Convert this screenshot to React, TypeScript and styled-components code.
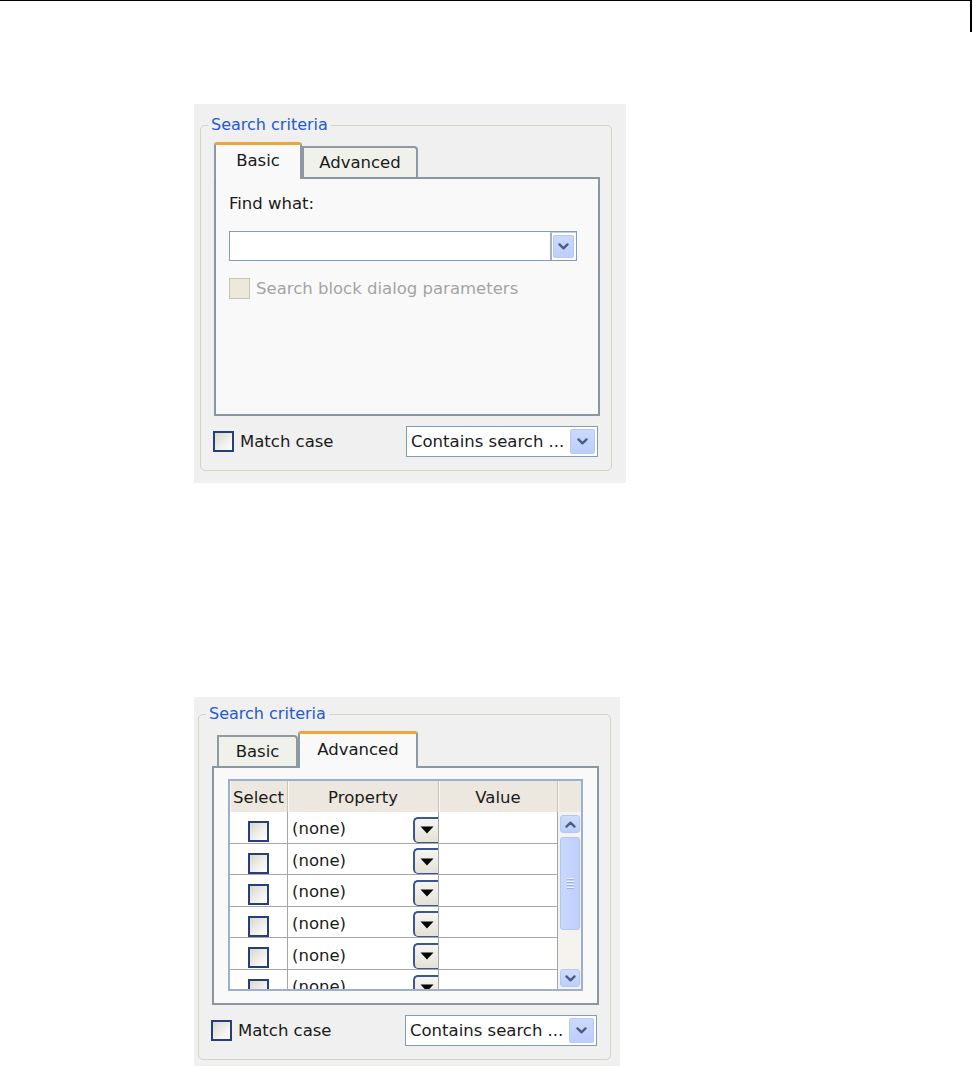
import React from "react";
import styled, { createGlobalStyle } from "styled-components";

const GlobalStyle = createGlobalStyle`
  html, body { margin: 0; padding: 0; background: #ffffff; }
  body { font-family: "DejaVu Sans", "Liberation Sans", sans-serif; color: #1a1a1a; }
  *, *::before, *::after { box-sizing: border-box; }
`;

const Page = styled.main`
  width: 973px;
  height: 1067px;
  overflow: hidden;
  display: flex;
  flex-direction: column;
`;

const RunningHead = styled.header`
  flex: none;
  width: 972px;
  height: 32px;
  border-top: 1px solid #000;
  border-right: 2px solid #000;
`;

const Panel = styled.section<{ $w: number; $mt: number; $pt: number; $pb: number; $pl: number }>`
  flex: none;
  margin: ${(p) => p.$mt}px 0 0 194px;
  width: ${(p) => p.$w}px;
  padding: ${(p) => p.$pt}px 0 ${(p) => p.$pb}px ${(p) => p.$pl}px;
  background: #f0f0f0;
`;

const Group = styled.fieldset<{ $w: number }>`
  width: ${(p) => p.$w}px;
  margin: 0;
  padding: 7px 11px 13px 13px;
  border: 1px solid #d3d3c3;
  border-radius: 5px;
  min-inline-size: 0;
`;

const Legend = styled.legend`
  margin-left: -6px;
  padding: 0 3px;
  font-size: 16px;
  line-height: 20px;
  color: #2458d8;
`;

const Stack = styled.div`
  display: flex;
  flex-direction: column;
`;

const TabStrip = styled.div`
  display: flex;
  align-items: flex-end;
  height: 35px;
`;

const Tab = styled.div<{ $active: boolean; $w: number; $ml: number }>`
  position: relative;
  z-index: ${(p) => (p.$active ? 2 : 1)};
  width: ${(p) => p.$w}px;
  margin-left: ${(p) => p.$ml}px;
  height: ${(p) => (p.$active ? 37 : 31)}px;
  margin-bottom: ${(p) => (p.$active ? -2 : 0)}px;
  padding-bottom: ${(p) => (p.$active ? 3 : 0)}px;
  border: 2px solid #8d9aa1;
  border-bottom: none;
  border-top: ${(p) => (p.$active ? "3px solid #f2a537" : "2px solid #8d9aa1")};
  border-radius: ${(p) => (p.$active ? "3px 3px 0 0" : "0 4px 0 0")};
  background: ${(p) => (p.$active ? "#f9f9f9" : "#f1f1ec")};
  display: flex;
  align-items: center;
  justify-content: center;
  font-size: 16.5px;
  line-height: 20px;
  color: #1a1a1a;
`;

const TabBody = styled.div`
  height: 239px;
  border: 2px solid #8a979d;
  background: #f9f9f9;
`;

const BasicBody = styled.div`
  display: flex;
  flex-direction: column;
  align-items: flex-start;
  padding: 15px 0 0 13px;
`;

const FieldLabel = styled.div`
  font-size: 16.5px;
  line-height: 20px;
  color: #1a1a1a;
`;

const Select = styled.div<{ $w: number; $h: number; $mt?: number }>`
  display: flex;
  align-items: stretch;
  width: ${(p) => p.$w}px;
  height: ${(p) => p.$h}px;
  margin-top: ${(p) => p.$mt ?? 0}px;
  border: 1px solid #7f9db9;
  background: #ffffff;
`;

const SelectText = styled.span`
  flex: 1;
  display: flex;
  align-items: center;
  padding-left: 4px;
  font-size: 16.5px;
  line-height: 20px;
  white-space: nowrap;
  overflow: hidden;
  color: #1a1a1a;
`;

const ComboFrame = styled.span`
  flex: none;
  display: flex;
  padding: 2px 2px 2px 1px;
  border-left: 2px solid #a7b0bb;
  border-top: 1px solid #c9ced5;
`;

const ArrowButton = styled.span<{ $w: number }>`
  flex: none;
  width: ${(p) => p.$w}px;
  display: flex;
  align-items: center;
  justify-content: center;
  border: 1px solid #b7c9f4;
  border-radius: 2px;
  background: linear-gradient(#cbd9fd, #bccefb);
`;

const PlainArrow = styled(ArrowButton)`
  margin: 2px 2px 2px 0;
`;

const OptionRow = styled.label<{ $mt?: number }>`
  display: flex;
  align-items: center;
  gap: 6px;
  margin-top: ${(p) => p.$mt ?? 0}px;
`;

const CheckBox = styled.span<{ $disabled?: boolean }>`
  flex: none;
  width: 21px;
  height: 21px;
  border: ${(p) => (p.$disabled ? "1.5px solid #c9c5b5" : "2px solid #263f7b")};
  background: ${(p) =>
    p.$disabled ? "#ece9dc" : "linear-gradient(135deg, #d8d8d0 0%, #efefea 55%, #ffffff 100%)"};
`;

const OptionText = styled.span<{ $disabled?: boolean }>`
  font-size: 16.5px;
  line-height: 20px;
  color: ${(p) => (p.$disabled ? "#a4a4a4" : "#1a1a1a")};
`;

const Footer = styled.div`
  display: flex;
  align-items: center;
  justify-content: space-between;
  height: 31px;
  margin: 10px 2px 0 -1px;
`;

/* ---------- table ---------- */

const Table = styled.div`
  margin: 11px 0 0 14px;
  width: 355px;
  height: 212px;
  border: 2px solid #9bb0cd;
  background: #ffffff;
  display: flex;
  flex-direction: column;
  overflow: hidden;
`;

const HeaderRow = styled.div`
  flex: none;
  display: flex;
  height: 31px;
  background: #ece8df;
`;

const HeadCell = styled.div<{ $w: number; $last?: boolean }>`
  flex: none;
  width: ${(p) => p.$w}px;
  display: flex;
  align-items: center;
  justify-content: center;
  padding-top: 3px;
  font-size: 16.5px;
  line-height: 20px;
  color: #1a1a1a;
  border-right: ${(p) => (p.$last ? "none" : "1px solid #c8c3b6")};
  box-shadow: inset 1px 0 0 #fbfaf7;
`;

const BodyArea = styled.div`
  flex: 1;
  display: flex;
  min-height: 0;
`;

const Rows = styled.div`
  width: 328px;
  flex: none;
  overflow: hidden;
`;

const Row = styled.div`
  display: flex;
  height: 31.6px;
  border-bottom: 1px solid #a6a6a6;
`;

const SelectCell = styled.div`
  flex: none;
  width: 58px;
  display: flex;
  justify-content: center;
  align-items: flex-start;
  padding-top: 9px;
  border-right: 1px solid #a6a6a6;
`;

const PropertyCell = styled.div`
  flex: none;
  width: 151px;
  display: flex;
  justify-content: space-between;
  align-items: flex-end;
  border-right: 1px solid #a6a6a6;
`;

const CellText = styled.span`
  align-self: center;
  padding: 4px 0 0 4px;
  font-size: 16.5px;
  line-height: 20px;
  color: #1a1a1a;
`;

const DropButton = styled.span`
  flex: none;
  width: 25px;
  height: 26px;
  display: flex;
  align-items: center;
  justify-content: center;
  border: 2px solid #3b5792;
  border-right: none;
  border-bottom-width: 1px;
  border-radius: 5px 0 0 5px;
  background: linear-gradient(#f6f5f1, #e4e1d6);
`;

const ValueCell = styled.div`
  flex: none;
  width: 119px;
  border-right: 1px solid #a6a6a6;
`;

const ScrollBar = styled.div`
  flex: none;
  width: 23px;
  display: flex;
  flex-direction: column;
  padding: 3px 1px 2px 2px;
  background: #f4f3ee;
`;

const ScrollButton = styled.span<{ $end?: boolean }>`
  flex: none;
  height: 18px;
  margin-top: ${(p) => (p.$end ? "auto" : "0")};
  display: flex;
  align-items: center;
  justify-content: center;
  border: 1px solid #b5c8f3;
  border-radius: 3px;
  background: linear-gradient(#d0dcfd, #bccefb);
`;

const Thumb = styled.span`
  flex: none;
  height: 93px;
  margin-top: 4px;
  display: flex;
  align-items: center;
  justify-content: center;
  border: 1px solid #b3c6f2;
  border-radius: 3px;
  background: linear-gradient(90deg, #c9d8fd, #bdcffb);
`;

const Grip = styled.span`
  width: 7px;
  height: 11px;
  background: repeating-linear-gradient(to bottom, #eef3ff 0 1px, #9db2e3 1px 2px, transparent 2px 3px);
`;

/* ---------- icons ---------- */

const Chevron = ({ up = false }: { up?: boolean }) => (
  <svg width="11" height="7" viewBox="0 0 11 7" aria-hidden>
    <polyline
      points={up ? "1.5,5.6 5.5,1.6 9.5,5.6" : "1.5,1.4 5.5,5.4 9.5,1.4"}
      fill="none"
      stroke="#4a5d86"
      strokeWidth="2.3"
      strokeLinecap="round"
      strokeLinejoin="round"
    />
  </svg>
);

const DownTriangle = () => (
  <svg width="14" height="8" viewBox="0 0 14 8" aria-hidden>
    <polygon points="0.5,0.5 13.5,0.5 7,7.5" fill="#000" />
  </svg>
);

/* ---------- composition ---------- */

type TabSpec = { label: string; w: number; ml: number; active: boolean };

const MatchFooter = () => (
  <Footer>
    <OptionRow>
      <CheckBox />
      <OptionText>Match case</OptionText>
    </OptionRow>
    <Select $w={192} $h={31}>
      <SelectText>Contains search ...</SelectText>
      <PlainArrow $w={25}>
        <Chevron />
      </PlainArrow>
    </Select>
  </Footer>
);

const BasicContent = () => (
  <BasicBody>
    <FieldLabel>Find what:</FieldLabel>
    <Select $w={348} $h={30} $mt={17}>
      <SelectText />
      <ComboFrame>
        <ArrowButton $w={21}>
          <Chevron />
        </ArrowButton>
      </ComboFrame>
    </Select>
    <OptionRow $mt={17}>
      <CheckBox $disabled />
      <OptionText $disabled>Search block dialog parameters</OptionText>
    </OptionRow>
  </BasicBody>
);

const rows = [0, 1, 2, 3, 4, 5];

const AdvancedContent = () => (
  <Table>
    <HeaderRow>
      <HeadCell $w={58}>Select</HeadCell>
      <HeadCell $w={151}>Property</HeadCell>
      <HeadCell $w={119}>Value</HeadCell>
      <HeadCell $w={23} $last />
    </HeaderRow>
    <BodyArea>
      <Rows>
        {rows.map((r) => (
          <Row key={r}>
            <SelectCell>
              <CheckBox />
            </SelectCell>
            <PropertyCell>
              <CellText>(none)</CellText>
              <DropButton>
                <DownTriangle />
              </DropButton>
            </PropertyCell>
            <ValueCell />
          </Row>
        ))}
      </Rows>
      <ScrollBar>
        <ScrollButton>
          <Chevron up />
        </ScrollButton>
        <Thumb>
          <Grip />
        </Thumb>
        <ScrollButton $end>
          <Chevron />
        </ScrollButton>
      </ScrollBar>
    </BodyArea>
  </Table>
);

const SearchCriteria = ({
  tabs,
  children,
  panel,
  groupWidth,
}: {
  tabs: TabSpec[];
  children: React.ReactNode;
  panel: { w: number; mt: number; pt: number; pb: number; pl: number };
  groupWidth: number;
}) => (
  <Panel $w={panel.w} $mt={panel.mt} $pt={panel.pt} $pb={panel.pb} $pl={panel.pl}>
    <Group $w={groupWidth}>
      <Legend>Search criteria</Legend>
      <Stack>
        <TabStrip>
          {tabs.map((t) => (
            <Tab key={t.label} $active={t.active} $w={t.w} $ml={t.ml}>
              {t.label}
            </Tab>
          ))}
        </TabStrip>
        <TabBody>{children}</TabBody>
        <MatchFooter />
      </Stack>
    </Group>
  </Panel>
);

export default function App() {
  return (
    <>
      <GlobalStyle />
      <Page>
        <RunningHead />
        <SearchCriteria
          panel={{ w: 432, mt: 72, pt: 11, pb: 12, pl: 6 }}
          groupWidth={412}
          tabs={[
            { label: "Basic", w: 88, ml: 0, active: true },
            { label: "Advanced", w: 116, ml: 0, active: false },
          ]}
        >
          <BasicContent />
        </SearchCriteria>
        <SearchCriteria
          panel={{ w: 426, mt: 214, pt: 7, pb: 6, pl: 4 }}
          groupWidth={413}
          tabs={[
            { label: "Basic", w: 81, ml: 5, active: false },
            { label: "Advanced", w: 120, ml: 0, active: true },
          ]}
        >
          <AdvancedContent />
        </SearchCriteria>
      </Page>
    </>
  );
}
